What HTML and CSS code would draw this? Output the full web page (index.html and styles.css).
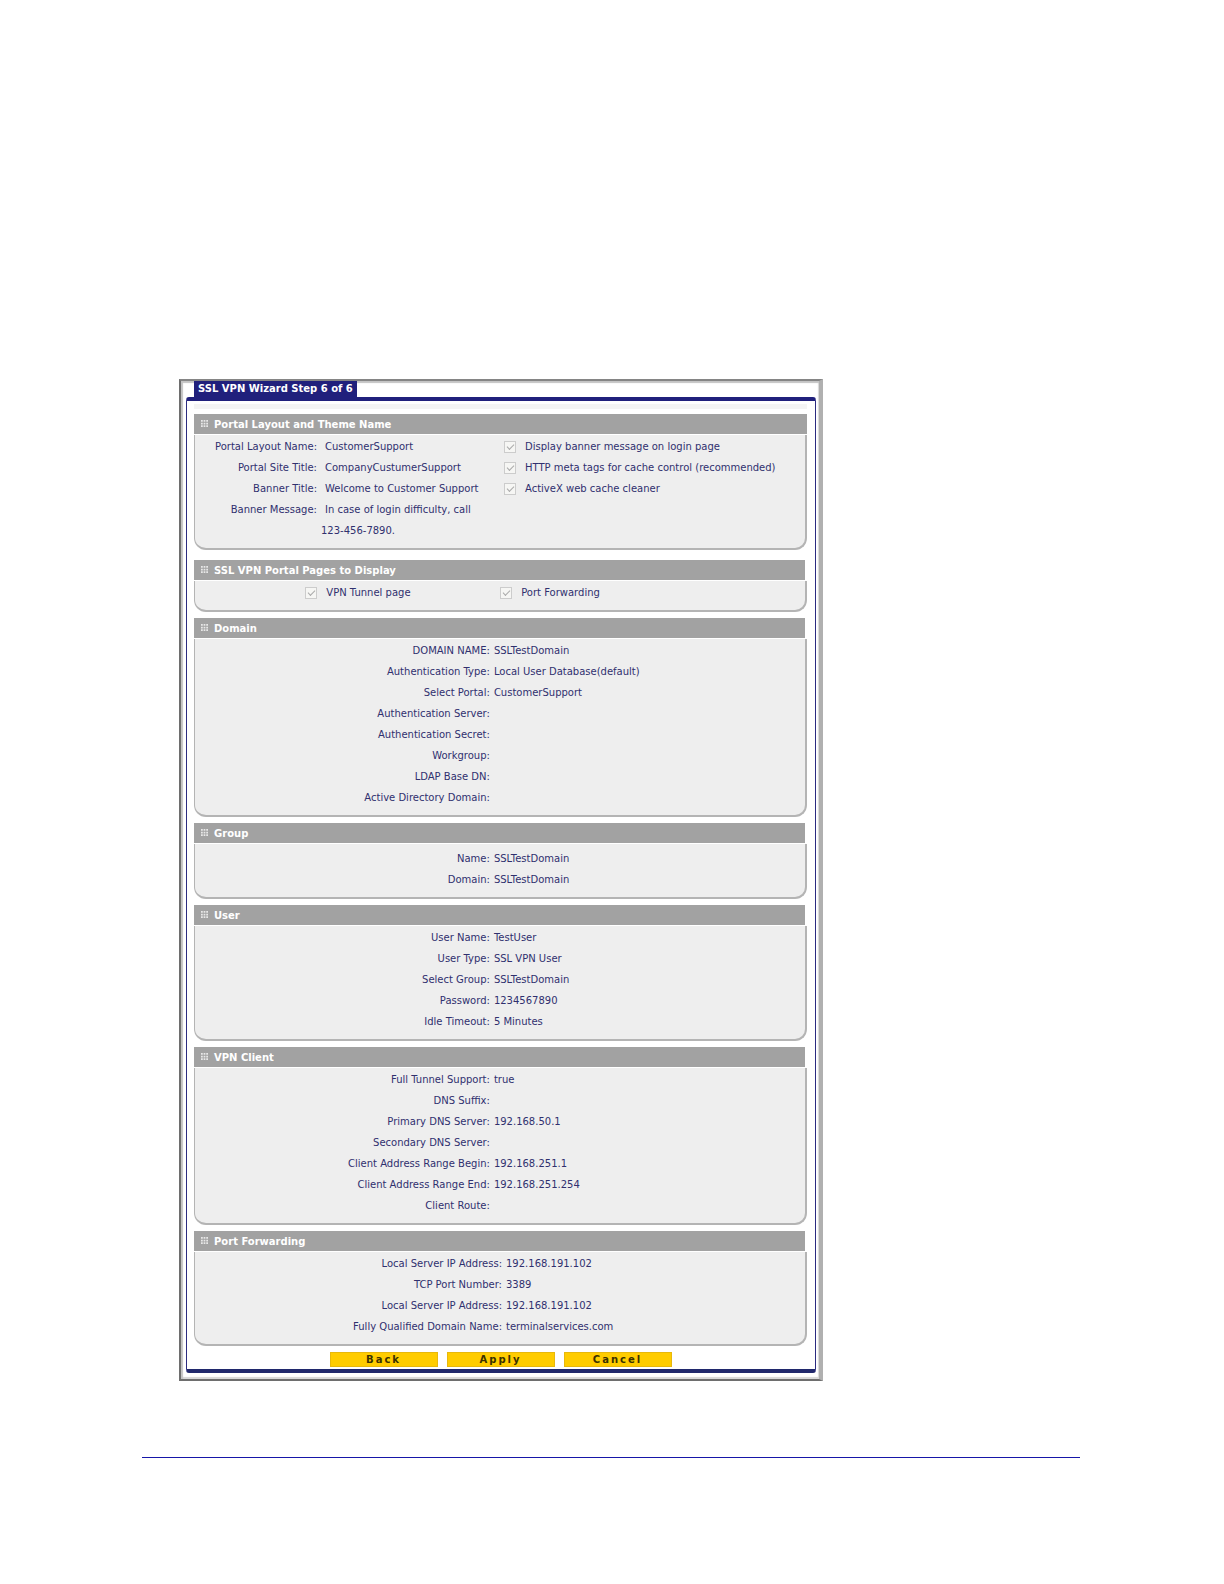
FILE: index.html
```
<!DOCTYPE html>
<html lang="en">
<head>
    <meta charset="UTF-8">
    <meta name="viewport" content="width=device-width, initial-scale=1.0">
    <title>SSL VPN Wizard</title>
    <link rel="stylesheet" href="styles.css">
</head>
<body>
    <!-- dotted grip used in every section heading -->
    <svg class="sprite" aria-hidden="true">
        <symbol id="grip" viewBox="0 0 8 8">
            <path d="M0 0h2v2H0zM3 0h2v2H3zM6 0h2v2H6zM0 3h2v2H0zM3 3h2v2H3zM6 3h2v2H6zM0 6h2v2H0zM3 6h2v2H3zM6 6h2v2H6z"/>
        </symbol>
    </svg>

    <div class="page">
        <main class="frame">
            <h1 class="tab">SSL VPN Wizard Step 6 of 6</h1>
            <form class="panel">
                <div class="strip"></div>

                <section class="section first">
                    <h2><svg class="grip"><use href="#grip"/></svg>Portal Layout and Theme Name</h2>
                    <div class="body columns">
                        <dl class="portal">
                            <dt>Portal Layout Name:</dt><dd>CustomerSupport</dd>
                            <dt>Portal Site Title:</dt><dd>CompanyCustumerSupport</dd>
                            <dt>Banner Title:</dt><dd>Welcome to Customer Support</dd>
                            <dt>Banner Message:</dt><dd class="message">In case of login difficulty, call<br>123-456-7890.</dd>
                        </dl>
                        <div class="options">
                            <label><input type="checkbox" checked disabled>Display banner message on login page</label>
                            <label><input type="checkbox" checked disabled>HTTP meta tags for cache control (recommended)</label>
                            <label><input type="checkbox" checked disabled>ActiveX web cache cleaner</label>
                        </div>
                    </div>
                </section>

                <section class="section">
                    <h2><svg class="grip"><use href="#grip"/></svg>SSL VPN Portal Pages to Display</h2>
                    <div class="body pages">
                        <label><input type="checkbox" checked disabled>VPN Tunnel page</label>
                        <label><input type="checkbox" checked disabled>Port Forwarding</label>
                    </div>
                </section>

                <section class="section">
                    <h2><svg class="grip"><use href="#grip"/></svg>Domain</h2>
                    <dl class="body list">
                        <dt>DOMAIN NAME:</dt><dd>SSLTestDomain</dd>
                        <dt>Authentication Type:</dt><dd>Local User Database(default)</dd>
                        <dt>Select Portal:</dt><dd>CustomerSupport</dd>
                        <dt>Authentication Server:</dt><dd></dd>
                        <dt>Authentication Secret:</dt><dd></dd>
                        <dt>Workgroup:</dt><dd></dd>
                        <dt>LDAP Base DN:</dt><dd></dd>
                        <dt>Active Directory Domain:</dt><dd></dd>
                    </dl>
                </section>

                <section class="section">
                    <h2><svg class="grip"><use href="#grip"/></svg>Group</h2>
                    <dl class="body list group">
                        <dt>Name:</dt><dd>SSLTestDomain</dd>
                        <dt>Domain:</dt><dd>SSLTestDomain</dd>
                    </dl>
                </section>

                <section class="section">
                    <h2><svg class="grip"><use href="#grip"/></svg>User</h2>
                    <dl class="body list">
                        <dt>User Name:</dt><dd>TestUser</dd>
                        <dt>User Type:</dt><dd>SSL VPN User</dd>
                        <dt>Select Group:</dt><dd>SSLTestDomain</dd>
                        <dt>Password:</dt><dd>1234567890</dd>
                        <dt>Idle Timeout:</dt><dd>5 Minutes</dd>
                    </dl>
                </section>

                <section class="section">
                    <h2><svg class="grip"><use href="#grip"/></svg>VPN Client</h2>
                    <dl class="body list">
                        <dt>Full Tunnel Support:</dt><dd>true</dd>
                        <dt>DNS Suffix:</dt><dd></dd>
                        <dt>Primary DNS Server:</dt><dd>192.168.50.1</dd>
                        <dt>Secondary DNS Server:</dt><dd></dd>
                        <dt>Client Address Range Begin:</dt><dd>192.168.251.1</dd>
                        <dt>Client Address Range End:</dt><dd>192.168.251.254</dd>
                        <dt>Client Route:</dt><dd></dd>
                    </dl>
                </section>

                <section class="section">
                    <h2><svg class="grip"><use href="#grip"/></svg>Port Forwarding</h2>
                    <dl class="body list forwarding">
                        <dt>Local Server IP Address:</dt><dd>192.168.191.102</dd>
                        <dt>TCP Port Number:</dt><dd>3389</dd>
                        <dt>Local Server IP Address:</dt><dd>192.168.191.102</dd>
                        <dt>Fully Qualified Domain Name:</dt><dd>terminalservices.com</dd>
                    </dl>
                </section>

                <div class="buttons">
                    <button type="button">Back</button>
                    <button type="submit">Apply</button>
                    <button type="button">Cancel</button>
                </div>
            </form>
        </main>
        <hr class="rule">
    </div>
</body>
</html>
```
FILE: styles.css
```
* {
    box-sizing: border-box;
}

body {
    margin: 0;
    background: #fff;
    color: #30306e;
    font-family: Verdana, "DejaVu Sans", sans-serif;
    font-size: 10px;
    line-height: 21px;
}

h1, h2, dl, dd {
    margin: 0;
}

.sprite {
    display: none;
}

.page {
    padding: 379px 144px 120px 142px;
}

.frame {
    max-width: 644px;
    margin-left: 37px;
    padding: 0 3px 6px 5px;
    border: 2px solid #6e6e6e;
    border-top-color: #858585;
    border-right: 4px solid #b0b0b0;
    box-shadow: inset 2px 2px 1px #c4c4c4, inset -1px -2px 1px #d8d8d8;
}

.tab {
    width: fit-content;
    margin-left: 8px;
    padding: 0 4px;
    background: #20207c;
    color: #fff;
    font-size: 10px;
    line-height: 16px;
}

.panel {
    padding: 3px 8px 2px 7px;
    border: 1px solid #2b2b80;
    border-top: 4px solid #20207c;
    border-bottom: 4px solid #20286c;
    border-radius: 3px;
    background: #fff;
}

.strip {
    height: 5px;
    margin-bottom: 5px;
    background: #f4f4f4;
}

.section {
    margin-bottom: 6px;
}

.first {
    margin-bottom: 10px;
}

.section h2 {
    display: flex;
    align-items: center;
    margin-right: 2px;
    padding: 2px 0 0 7px;
    background: #a2a2a2;
    color: #fff;
    font-size: 10px;
    line-height: 18px;
}

.first h2 {
    margin-right: 0;
}

.grip {
    width: 7px;
    height: 7px;
    margin: 0 6px 4px 0;
    fill: #e8e8e8;
}

.body {
    margin-top: 1px;
    padding: 1px 0 7px;
    border: 1px solid #b4b4b4;
    border-width: 0 2px 2px 1px;
    border-radius: 0 0 12px 12px;
    background: #eee;
}

.list {
    display: grid;
    grid-template-columns: 48% 1fr;
    grid-auto-rows: 21px;
    column-gap: 4px;
    padding-left: 4px;
}

.group {
    padding-top: 4px;
}

.forwarding {
    grid-template-columns: 50% 1fr;
}

dt {
    text-align: right;
}

.columns {
    display: grid;
    grid-template-columns: 305px 1fr;
    column-gap: 4px;
}

.portal {
    display: grid;
    grid-template-columns: 40% 1fr;
    column-gap: 8px;
}

/* the second line hangs out to the left of the first */
.message {
    margin-left: -4px;
    text-indent: 4px;
}

label {
    display: flex;
    align-items: center;
}

input {
    appearance: none;
    display: grid;
    place-items: center;
    width: 12px;
    height: 12px;
    margin: 0 9px 0 0;
    border: 1px solid #ccc;
    background: #f6f6f4;
}

input:checked::before {
    content: "";
    width: 6px;
    height: 3px;
    margin-bottom: 2px;
    border: solid #aaa;
    border-width: 0 0 1px 1px;
    transform: rotate(-45deg);
}

.pages {
    display: grid;
    grid-template-columns: 39% 1fr;
    padding-left: 18%;
}

.buttons {
    display: flex;
    justify-content: center;
    gap: 9px;
}

button {
    width: 108px;
    padding: 0;
    border: 1px solid #e8b80c;
    background: #fc0;
    color: #3a3000;
    font: bold 10px/13px Verdana, "DejaVu Sans", sans-serif;
    letter-spacing: 2px;
}

.rule {
    height: 1px;
    margin: 76px 0 0;
    border: 0;
    background: #1616a8;
}
```
